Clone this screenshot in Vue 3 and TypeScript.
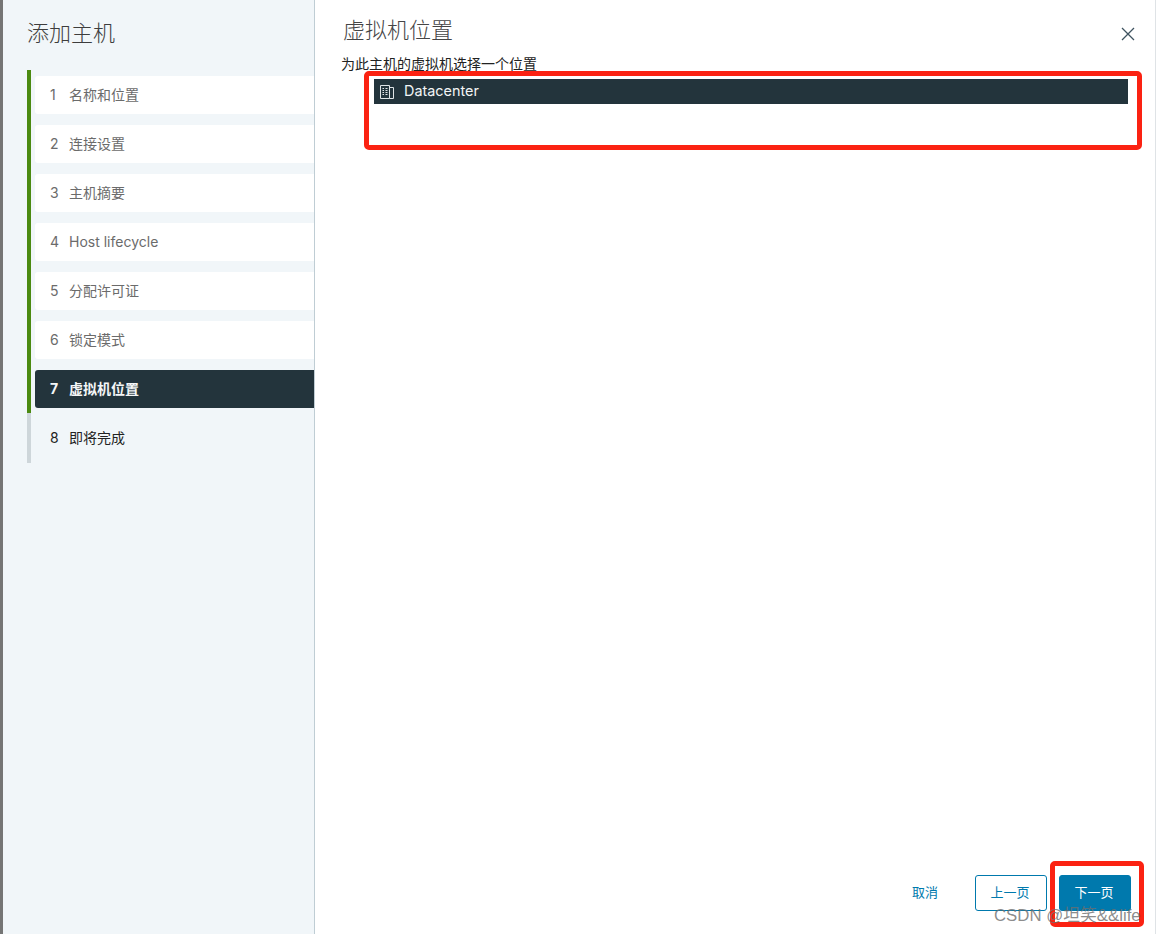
<script setup lang="ts">
interface Step { n: number; label: string; state: 'done' | 'active' | 'todo' }
const steps: Step[] = [
  { n: 1, label: '名称和位置', state: 'done' },
  { n: 2, label: '连接设置', state: 'done' },
  { n: 3, label: '主机摘要', state: 'done' },
  { n: 4, label: 'Host lifecycle', state: 'done' },
  { n: 5, label: '分配许可证', state: 'done' },
  { n: 6, label: '锁定模式', state: 'done' },
  { n: 7, label: '虚拟机位置', state: 'active' },
  { n: 8, label: '即将完成', state: 'todo' }
]
</script>

<template>
  <div class="page">
    <div class="backdrop"></div>
    <aside class="side">
      <h2 class="side-title">添加主机</h2>
      <ol class="stepper">
        <li v-for="s in steps" :key="s.n" class="step" :class="s.state">
          <div class="step-box">
            <span class="num">{{ s.n }}</span>
            <span class="label">{{ s.label }}</span>
          </div>
        </li>
      </ol>
    </aside>
    <main class="main">
      <header class="head">
        <h3 class="title">虚拟机位置</h3>
        <svg class="close" width="14" height="14" viewBox="0 0 14 14" aria-label="关闭">
          <path d="M1 1L13 13M13 1L1 13" stroke="#3f5360" stroke-width="1.3" fill="none" />
        </svg>
      </header>
      <p class="desc">为此主机的虚拟机选择一个位置</p>
      <div class="tree">
        <div class="tree-row">
          <svg class="dc" width="14" height="14" viewBox="0 0 14 14">
            <path d="M0.5 13.5V0.5H9.5V13.5ZM9.5 2.5H13.5V13.5H9.5" fill="none" stroke="#dfe4e6" stroke-width="1" />
            <path d="M2.5 3.5H4M5.5 3.5H7.5M2.5 5.5H4M5.5 5.5H7.5M2.5 7.5H4M5.5 7.5H7.5M2.5 9.5H4M5.5 9.5H7.5" stroke="#dfe4e6" stroke-width="1.2" />
          </svg>
          <span class="tree-text">Datacenter</span>
        </div>
      </div>
      <footer class="foot">
        <button class="btn link">取消</button>
        <button class="btn outline">上一页</button>
        <button class="btn primary">下一页</button>
      </footer>
    </main>
    <div class="mark mark-tree"></div>
    <div class="mark mark-next"></div>
    <div class="watermark">CSDN @坦笑&amp;&amp;life</div>
  </div>
</template>

<style>
html, body { margin: 0; padding: 0; background: #fff; }
</style>

<style scoped>
.page {
  position: relative;
  display: flex;
  width: 1156px;
  height: 934px;
  overflow: hidden;
  font-family: Inter, "Noto Sans CJK SC", sans-serif;
  color: #000;
}
.backdrop { width: 3px; flex: none; background: #757575; }
.side {
  width: 311px;
  flex: none;
  background: #f1f6f9;
  border-right: 1px solid #bfcdd4;
  padding-top: 18px;
}
.side-title {
  margin: 0 0 22px 24px;
  font-size: 22px;
  line-height: 30px;
  font-weight: 300;
  color: #3d3d3d;
}
.stepper {
  list-style: none;
  margin: 0 0 0 24px;
  padding: 0;
  display: flex;
  flex-direction: column;
}
.step {
  height: 49px;
  padding: 6px 0 5px 4px;
  box-sizing: border-box;
  border-left: 4px solid #4b8a11;
}
.step.todo { height: 50px; border-left-color: #ced6da; }
.step-box {
  display: flex;
  align-items: center;
  height: 38px;
  border-radius: 3px 0 0 3px;
  background: #fff;
  color: #6b6b6b;
  font-size: 14px;
  line-height: 36px;
}
.num { width: 34px; padding-left: 15px; box-sizing: border-box; flex: none; }
.step.active .step-box { background: #23343c; color: #f4f6f7; font-weight: 700; }
.step.todo .step-box { background: transparent; color: #222; }
.main {
  flex: 1;
  display: flex;
  flex-direction: column;
  min-width: 0;
  background: #fff;
  border-right: 1px solid #dfe3e6;
}
.head {
  display: flex;
  justify-content: space-between;
  align-items: center;
  height: 30px;
  padding: 15px 20px 0 28px;
}
.title {
  margin: 0;
  font-size: 22px;
  line-height: 30px;
  font-weight: 300;
  color: #454545;
}
.close { margin-top: 7px; }
.desc {
  margin: 10px 0 0 26px;
  font-size: 14px;
  line-height: 17px;
  color: #222;
}
.tree { margin: 7px 27px 0 59px; }
.tree-row {
  display: flex;
  align-items: center;
  gap: 10px;
  height: 25px;
  padding-left: 6px;
  background: #23343c;
  color: #f2f4f5;
  font-size: 14.4px;
  line-height: 23px;
}
.tree-text { padding-bottom: 2px; }
.dc { margin-top: 1px; }
.foot {
  margin-top: auto;
  display: flex;
  align-items: center;
  justify-content: flex-end;
  padding: 0 24px 23px 0;
}
.btn {
  height: 36px;
  box-sizing: border-box;
  border-radius: 3px;
  font: inherit;
  font-size: 13px;
  line-height: 32px;
  padding: 0 2px 2px 0;
  cursor: pointer;
}
.link { width: 74px; margin-right: 12px; background: transparent; border: none; color: #0079ad; }
.outline { width: 72px; margin-right: 12px; background: #fff; border: 1px solid #0079ad; color: #0079ad; }
.primary { width: 72px; background: #0079ad; border: 1px solid #0079ad; color: #fff; }
.mark {
  position: absolute;
  box-sizing: border-box;
  border: 5px solid #fb2212;
  border-radius: 5px;
  pointer-events: none;
}
.mark-tree { left: 364px; top: 71px; width: 778px; height: 79px; }
.mark-next { left: 1050px; top: 861px; width: 94px; height: 66px; }
.watermark {
  position: absolute;
  left: 994px;
  top: 905px;
  font-family: "Liberation Sans", "Noto Sans CJK SC", sans-serif;
  font-size: 16.8px;
  line-height: 22px;
  color: rgba(110, 110, 110, 0.8);
  white-space: nowrap;
  pointer-events: none;
}
</style>
